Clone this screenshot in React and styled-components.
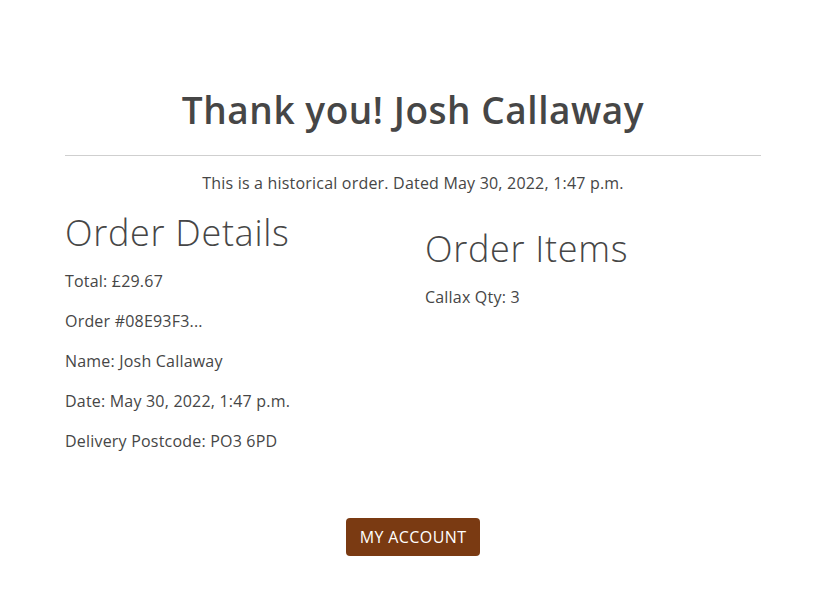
import React from "react";
import styled, { createGlobalStyle } from "styled-components";

const Global = createGlobalStyle`
  html, body { margin: 0; padding: 0; background: #fff; }
  body {
    font-family: "Open Sans", "Noto Sans", sans-serif;
    color: #464646;
    font-size: 16px;
    line-height: 1.5;
    letter-spacing: 0.2px;
  }
  * { box-sizing: border-box; }
`;

const Container = styled.main`
  max-width: 720px;
  margin: 0 auto;
  padding: 88px 12px 40px;
`;

const Title = styled.h1`
  margin: 0;
  text-align: center;
  font-size: 37px;
  font-weight: 600;
  line-height: 44px;
  letter-spacing: 0.55px;
  color: #464646;
`;

const Rule = styled.hr`
  border: 0;
  border-top: 1px solid #cfcfcf;
  margin: 23px 0 15px;
`;

const Note = styled.p`
  margin: 0 0 16px;
  text-align: center;
  font-size: 16px;
`;

const Row = styled.div`
  display: grid;
  grid-template-columns: 1fr 1fr;
  column-gap: 24px;
`;

const Column = styled.section`
  padding-top: ${(p) => p.$offset || 0}px;
`;

const Heading = styled.h2`
  margin: 0 0 14px;
  font-size: 36px;
  font-weight: 300;
  line-height: 44px;
  letter-spacing: 0.7px;
  color: #464646;
`;

const Line = styled.p`
  margin: 0 0 16px;
  font-size: 16px;
  line-height: 24px;
`;

const Actions = styled.div`
  display: flex;
  justify-content: center;
  margin-top: 49px;
`;

const Button = styled.a`
  display: inline-block;
  background: #7a3a12;
  color: #fff;
  font-size: 16px;
  font-weight: 500;
  line-height: 24px;
  letter-spacing: 0.4px;
  padding: 7px 14px;
  border-radius: 4px;
  text-decoration: none;
  text-transform: uppercase;
`;

export default function App() {
  return (
    <>
      <Global />
      <Container>
        <Title>Thank you! Josh Callaway</Title>
        <Rule />
        <Note>This is a historical order. Dated May 30, 2022, 1:47 p.m.</Note>
        <Row>
          <Column>
            <Heading>Order Details</Heading>
            <Line>Total: £29.67</Line>
            <Line>Order #08E93F3...</Line>
            <Line>Name: Josh Callaway</Line>
            <Line>Date: May 30, 2022, 1:47 p.m.</Line>
            <Line>Delivery Postcode: PO3 6PD</Line>
          </Column>
          <Column $offset={16}>
            <Heading>Order Items</Heading>
            <Line>Callax Qty: 3</Line>
          </Column>
        </Row>
        <Actions>
          <Button href="#">My Account</Button>
        </Actions>
      </Container>
    </>
  );
}
